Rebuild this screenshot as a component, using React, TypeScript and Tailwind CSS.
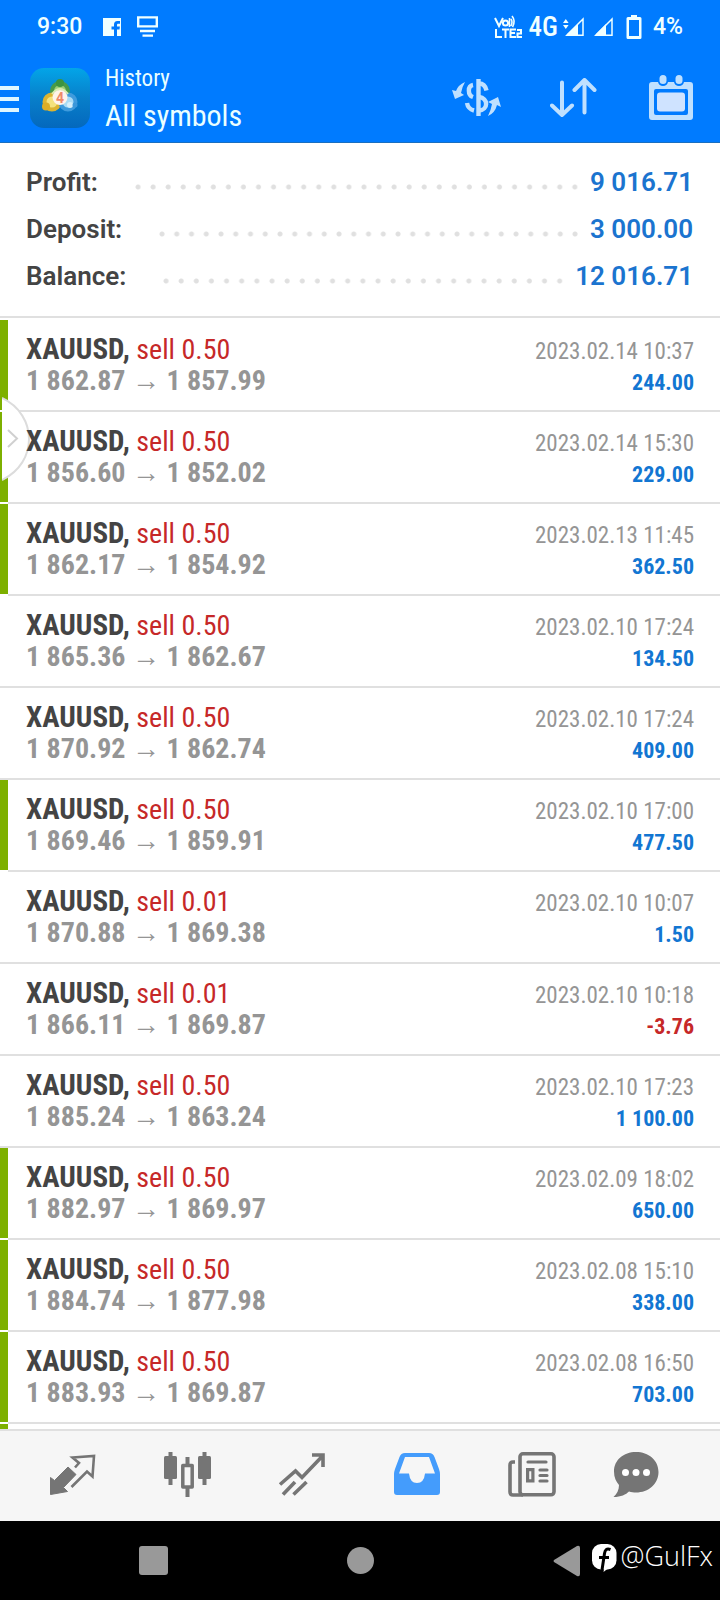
import type { ReactNode } from "react";

type Deal = {
  lots: string;
  open: string;
  close: string;
  time: string;
  profit: string;
  marked: boolean;
};

const deals: Deal[] = [
  { lots: "0.50", open: "1 862.87", close: "1 857.99", time: "2023.02.14 10:37", profit: "244.00", marked: true },
  { lots: "0.50", open: "1 856.60", close: "1 852.02", time: "2023.02.14 15:30", profit: "229.00", marked: true },
  { lots: "0.50", open: "1 862.17", close: "1 854.92", time: "2023.02.13 11:45", profit: "362.50", marked: true },
  { lots: "0.50", open: "1 865.36", close: "1 862.67", time: "2023.02.10 17:24", profit: "134.50", marked: false },
  { lots: "0.50", open: "1 870.92", close: "1 862.74", time: "2023.02.10 17:24", profit: "409.00", marked: false },
  { lots: "0.50", open: "1 869.46", close: "1 859.91", time: "2023.02.10 17:00", profit: "477.50", marked: true },
  { lots: "0.01", open: "1 870.88", close: "1 869.38", time: "2023.02.10 10:07", profit: "1.50", marked: false },
  { lots: "0.01", open: "1 866.11", close: "1 869.87", time: "2023.02.10 10:18", profit: "-3.76", marked: false },
  { lots: "0.50", open: "1 885.24", close: "1 863.24", time: "2023.02.10 17:23", profit: "1 100.00", marked: false },
  { lots: "0.50", open: "1 882.97", close: "1 869.97", time: "2023.02.09 18:02", profit: "650.00", marked: true },
  { lots: "0.50", open: "1 884.74", close: "1 877.98", time: "2023.02.08 15:10", profit: "338.00", marked: true },
  { lots: "0.50", open: "1 883.93", close: "1 869.87", time: "2023.02.08 16:50", profit: "703.00", marked: true },
];

const totals = [
  { label: "Profit:", value: "9 016.71" },
  { label: "Deposit:", value: "3 000.00" },
  { label: "Balance:", value: "12 016.71" },
];

function StatusBar() {
  return (
    <div className="flex h-[54px] items-center pl-[37px] pr-[37px] font-['Roboto',sans-serif] text-[23px] font-medium text-[#f0ffff]">
      <span>9:30</span>
      <svg className="ml-[21px]" width="18" height="18" viewBox="0 0 18 18" aria-hidden="true">
        <path fill="currentColor" fillRule="evenodd" d="M0 0h18v18h-4v-6.500h2.500l.4-3H14V7c0-.9.500-1.300 1.300-1.300H17V3h-2.500C12 3 11 4.500 11 6.600v1.900H8.500v3H11V18H0Z" />
      </svg>
      <svg className="ml-4" width="21" height="22" viewBox="0 0 21 22" fill="none" stroke="currentColor" aria-hidden="true">
        <path strokeWidth="2.400" d="M1.200 1.400h18.600v9H1.200zM3 15h15M5.500 19.600h10.500" />
      </svg>
      <span className="grow" />
      <svg width="28" height="24" viewBox="0 0 28 24" fill="none" stroke="currentColor" strokeWidth="2" aria-hidden="true">
        <path d="M1 3l4 8 4-8M2 14v8h6M8 14.500h7M11.500 14v9M22 14.500h-5.500V22H22M16.500 18H21M23 15h4v3.500h-3.500V22H28" />
        <circle cx="11.500" cy="8" r="2.600" />
        <path strokeWidth="1.600" d="M15.500 3v9M17 4q2 3 0 7M18 1q4 5 .5 11" />
      </svg>
      <span className="ml-[7px] font-['Roboto_Condensed','Roboto',sans-serif] text-[27px]">4G</span>
      <svg className="ml-[5px]" width="22" height="20" viewBox="0 0 22 20" aria-hidden="true">
        <path fill="currentColor" d="M0 6l2.800-4 2.800 4zM0 8l2.800 4 2.800-4zM2 19L15 7v12z" />
        <path fill="none" stroke="currentColor" strokeWidth="1.500" d="M4 18.200h16V2L4 18" />
      </svg>
      <svg className="ml-[9px]" width="20" height="20" viewBox="0 0 20 20" aria-hidden="true">
        <path fill="currentColor" d="M0 19L12 7v12z" />
        <path fill="none" stroke="currentColor" strokeWidth="1.500" d="M2 18.200h16V2L2 18" />
      </svg>
      <svg className="ml-3" width="16" height="24" viewBox="0 0 16 24" aria-hidden="true">
        <path fill="currentColor" fillRule="evenodd" d="M5 0h6v2h3q1.500 0 1.500 1.500v19Q15.500 24 14 24H2Q.5 24 .5 22.500v-19Q.5 2 2 2h3zM3 5v16h10V5z" />
      </svg>
      <span className="ml-[11px]">4%</span>
    </div>
  );
}

function AppLogo() {
  return (
    <svg width="60" height="60" viewBox="0 0 60 60" aria-hidden="true">
      <defs>
        <linearGradient id="tile" x1="0" y1="0" x2="0" y2="1">
          <stop offset="0" stopColor="#03a5e8" />
          <stop offset=".5" stopColor="#087fca" />
          <stop offset="1" stopColor="#0468bd" />
        </linearGradient>
      </defs>
      <rect width="60" height="60" rx="14" fill="url(#tile)" />
      <circle cx="30" cy="23" r="8" fill="#9ccf78" stroke="#4a9a48" strokeWidth="4" />
      <circle cx="22" cy="34" r="7.500" fill="#f4e27c" stroke="#dcb431" strokeWidth="4" />
      <circle cx="38" cy="34" r="7.500" fill="#a8dbf5" stroke="#3f9bdd" strokeWidth="4" />
      <path d="M22 26q8-10 16 0" stroke="#d9ecb0" strokeWidth="2" fill="none" />
      <circle cx="30" cy="15" r="4" fill="#3c9440" />
      <circle cx="16" cy="38.500" r="4" fill="#dcae26" />
      <circle cx="40" cy="37" r="3" fill="#d4eefb" />
      <circle cx="45" cy="37" r="2.500" fill="#3b97da" />
      <circle cx="30" cy="29.500" r="7.500" fill="#fff3ea" />
      <text x="30" y="34.500" textAnchor="middle" fontSize="14" fontWeight="700" fill="#ee8a68" fontFamily="Roboto, sans-serif">4</text>
    </svg>
  );
}

function HeaderBar() {
  return (
    <div className="flex h-[88px] items-start">
      <button type="button" aria-label="Menu" className="mt-8 flex w-[19px] flex-col gap-[7px]">
        <span className="h-1 w-full bg-[#dff6ff]" />
        <span className="h-1 w-full bg-[#dff6ff]" />
        <span className="h-1 w-full bg-[#dff6ff]" />
      </button>
      <div className="ml-[11px] mt-[14px]">
        <AppLogo />
      </div>
      <div className="ml-[15px] mt-2 grow text-[#eaffff]">
        <p className="text-[23px] leading-[34px]">History</p>
        <h1 className="text-[30px] leading-10">All symbols</h1>
      </div>
      <button type="button" aria-label="Filter by symbol" className="mt-6 text-[#bfe0ff]">
        <svg width="49" height="40" viewBox="0 0 49 40" fill="none" stroke="currentColor" strokeWidth="4.400">
          <path d="M26.500 1v37" />
          <path d="M27 5.500q6 0 7.500 7M27 19c9.500 1 9.500 13 0 13.500" />
          <path d="M21 7c-5.500 1-5.500 10 0 12M15 25q1 6 7 7.500" />
          <path fill="currentColor" stroke="none" d="M13 4Q6 7 4 13L0 12l3 9 9-4-3-2q1-6 4-11zM36 38q7-3 9-11l4 2-3-10-10 5 4 2q-1 6-4 12z" />
        </svg>
      </button>
      <button type="button" aria-label="Sort" className="ml-[49px] mt-6 text-[#bfe0ff]">
        <svg width="47" height="40" viewBox="0 0 47 40" fill="none" stroke="currentColor" strokeWidth="4" strokeLinecap="round" strokeLinejoin="round">
          <path d="M12 4.500V37M2 27.500L12 37l10-9.500M34.500 34.500V2M24.500 12L34.500 2l10 10" />
        </svg>
      </button>
      <button type="button" aria-label="Select period" className="ml-[52px] mr-[27px] mt-[21px] text-[#bfe0ff]">
        <svg width="44" height="45" viewBox="0 0 44 45" fill="none">
          <path fill="currentColor" fillRule="evenodd" d="M3 7h6q1 4 5 4t5-4h6q1 4 5 4t5-4h6q3 0 3 3v32q0 3-3 3H3q-3 0-3-3V10q0-3 3-3zM7 14q-2 0-2 2v22q0 2 2 2h30q2 0 2-2V16q0-2-2-2z" />
          <rect x="10.500" y="0" width="7" height="9" rx="3.500" fill="currentColor" />
          <rect x="26.500" y="0" width="7" height="9" rx="3.500" fill="currentColor" />
          <rect x="8" y="17.500" width="28" height="19" rx="3" fill="#cfe3ff" />
        </svg>
      </button>
    </div>
  );
}

function Totals() {
  return (
    <dl className="border-b-2 border-[#e0e0e0] pb-4 pl-[26px] pr-[27px] pt-4 font-['Roboto',sans-serif] text-[26px] leading-[47px]">
      {totals.map((t) => (
        <div key={t.label} className="flex">
          <dt className="font-semibold text-[#444]">{t.label}</dt>
          <dd className="flex grow font-semibold text-[#1b74cf]">
            <span
              aria-hidden="true"
              className="ml-[36px] mr-1 grow bg-[radial-gradient(circle_at_4px_50%,#e0e0e0_2px,transparent_3px)] bg-[length:15px_6px] bg-[position:0_25px] [background-repeat:round_no-repeat]"
            />
            {t.value}
          </dd>
        </div>
      ))}
    </dl>
  );
}

function DealRow({ deal }: { deal: Deal }) {
  const loss = deal.profit.startsWith("-");
  return (
    <li className="flex h-[92px] shrink-0">
      <span className={deal.marked ? "mb-[2px] w-2 bg-[#7db000]" : "w-2 border-b-2 border-[#e0e0e0]"} />
      <div className="grow border-b-2 border-[#e0e0e0] pl-[18px] pr-[26px] pt-[13px] leading-8">
        <div className="relative z-10 flex h-8 items-baseline justify-between">
          <span className="text-[28px]">
            <b className="text-[29px] font-bold text-[#444]">XAUUSD,</b> <span className="text-[#c62828]">sell {deal.lots}</span>
          </span>
          <time className="text-[23px] text-[#959595]">{deal.time}</time>
        </div>
        <div className="relative z-10 flex h-8 items-baseline justify-between font-bold">
          <span className="text-[28px] text-[#959595]">
            {deal.open} <span className="font-normal leading-none">→</span> {deal.close}
          </span>
          <span className={loss ? "text-[22px] text-[#c62828]" : "text-[22px] text-[#1276d2]"}>{deal.profit}</span>
        </div>
      </div>
    </li>
  );
}

function NavButton({ label, active, children }: { label: string; active?: boolean; children: ReactNode }) {
  return (
    <button
      type="button"
      aria-label={label}
      aria-current={active ? "page" : undefined}
      className={active ? "text-[#449cfc]" : "text-[#757575]"}
    >
      <svg width="48" height="48" viewBox="0 0 48 48" fill="none" stroke="currentColor">
        {children}
      </svg>
    </button>
  );
}

function BottomNav() {
  return (
    <nav className="grid h-[92px] shrink-0 grid-cols-[115fr_115fr_115fr_115fr_115fr_96fr] place-items-center border-t-2 border-[#e0e0e0] bg-[#f6f6f6] pl-[14px] pr-[35px]">
      <NavButton label="Quotes">
        <path fill="currentColor" strokeWidth="1" strokeLinejoin="round" d="M2.500 25.500l4 3L20 15l8 7.500L15.500 35.500l4 4L2.500 42.500z" />
        <path strokeWidth="2.600" d="M27 15.500l4-4.500-6.500-5.500L46 4l-1.500 20.500-5.500-5L23.500 35" />
      </NavButton>
      <NavButton label="Charts">
        <path strokeWidth="4" d="M7.500 0v33M41.500 0v33M24.500 5v8M24.500 35v10" />
        <rect x="1" y="4" width="13" height="23" rx="1.500" fill="currentColor" stroke="none" />
        <rect x="35" y="4" width="13" height="23" rx="1.500" fill="currentColor" stroke="none" />
        <path strokeWidth="3.500" strokeLinejoin="round" d="M19.800 13.500h9.400v21.500h-9.400z" />
      </NavButton>
      <NavButton label="Trade">
        <path strokeWidth="3.600" d="M2 32.500L17.500 19l6.500 6.500L44.500 4M34 3h11v12M5 42.500L17 30M15.500 42.500L28.500 30" />
      </NavButton>
      <NavButton label="History" active>
        <path fill="currentColor" fillRule="evenodd" stroke="none" d="M12 1h24q4 0 5.500 4l4.500 12q1 3 1 5v18q0 3-3 3H4q-3 0-3-3V22q0-2 1-5L6.500 5Q8 1 12 1zM12 5L6 21.500h10q1 9.500 8 9.500t8-9.500h10L36 5z" />
      </NavButton>
      <NavButton label="News">
        <rect x="12" y="1.800" width="34" height="41" rx="3" strokeWidth="3.600" />
        <path strokeWidth="3.600" d="M7 10H5q-3 0-3 3v27q0 3 3 3h10" />
        <path strokeWidth="3.200" strokeLinecap="round" d="M20 10h18M32 18h7M32 23.500h7M32 29h7" />
        <path strokeWidth="3.200" d="M19.600 17.600h5.300v11.300h-5.300z" />
      </NavButton>
      <NavButton label="Messages">
        <path fill="currentColor" stroke="none" d="M23 0C10.500 0 1 8 1 19.500c0 6 2 10 5 13.500 0 5-2 9-5.500 12C8 45 13 42.500 16 39.500c2.500.8 4.500 1 7 1 12.500 0 22.500-8.500 22.500-20.500S35.500 0 23 0z" />
        <g fill="#fff" stroke="none">
          <circle cx="12.500" cy="20.500" r="3.500" />
          <circle cx="23" cy="20.500" r="3.500" />
          <circle cx="33.500" cy="20.500" r="3.500" />
        </g>
      </NavButton>
    </nav>
  );
}

function SystemNav() {
  return (
    <footer className="flex h-[79px] shrink-0 items-center bg-black pl-[139px] pr-[7px] text-[#999]">
      <button type="button" aria-label="Recent apps" className="size-[29px] rounded-[3px] bg-[#999]" />
      <span className="grow" />
      <button type="button" aria-label="Home" className="size-[27px] rounded-full bg-[#999]" />
      <span className="grow" />
      <button type="button" aria-label="Back">
        <svg width="27" height="32" viewBox="0 0 27 32" fill="currentColor">
          <path d="M1 15L24 1q3-1 3 2v26q0 3-3 2L1 17q-1-1 0-2z" />
        </svg>
      </button>
      <a href="#profile" className="mb-[10px] ml-3 flex items-center gap-1 font-['Open_Sans',sans-serif] text-[27px] font-light leading-9 text-white">
        <svg className="mt-1" width="25" height="28" viewBox="0 0 25 28" aria-hidden="true">
          <rect width="24.500" height="25.500" rx="9" fill="#fff" />
          <path fill="none" stroke="#000" strokeWidth="3" d="M18.500 5.500c-4-1.500-5.500.5-6 4L10 26M7 13.500h10" />
          <path fill="#fff" d="M11.500 28l1-5 4 1z" />
        </svg>
        @GulFx
      </a>
    </footer>
  );
}

export default function App() {
  return (
    <div className="flex h-screen flex-col overflow-hidden bg-white font-['Roboto_Condensed','Roboto',sans-serif]">
      <header className="shrink-0 border-b border-[#1a6fc0] bg-[#007bff]">
        <StatusBar />
        <HeaderBar />
      </header>
      <main className="relative flex min-h-0 grow flex-col">
        <Totals />
        <ul className="flex min-h-0 grow flex-col overflow-hidden pt-[2px]">
          {deals.map((deal) => (
            <DealRow key={deal.open} deal={deal} />
          ))}
          <li aria-hidden="true" className="w-2 grow bg-[#7db000]" />
        </ul>
        <button type="button" aria-label="Open side panel" className="absolute left-[2px] top-[254px]">
          <svg width="29" height="84" viewBox="0 0 29 84" fill="none">
            <path fill="#fff" d="M0 1C36 18 36 66 0 83z" />
            <path stroke="#dcdcdc" strokeWidth="2" d="M0 1C36 18 36 66 0 83" />
            <path stroke="#d0d0d0" strokeWidth="2" d="M6 33l9 8.500L6 50" />
          </svg>
        </button>
      </main>
      <BottomNav />
      <SystemNav />
    </div>
  );
}
